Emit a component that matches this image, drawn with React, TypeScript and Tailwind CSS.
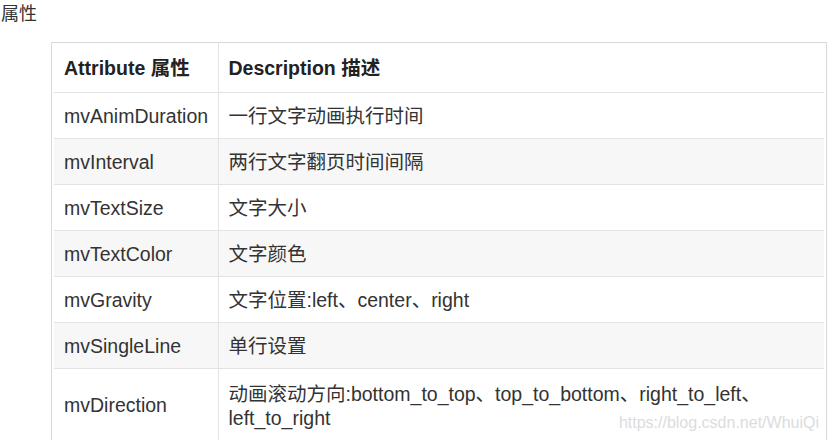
const rows: [string, React.ReactNode][] = [
  ['mvAnimDuration', '一行文字动画执行时间'],
  ['mvInterval', '两行文字翻页时间间隔'],
  ['mvTextSize', '文字大小'],
  ['mvTextColor', '文字颜色'],
  ['mvGravity', '文字位置:left、center、right'],
  ['mvSingleLine', '单行设置'],
]

export default function App() {
  return (
    <div
      className="w-[828px] h-[440px] overflow-hidden bg-white text-[#333]"
      style={{ fontFamily: '"Liberation Sans", "Noto Sans CJK SC", sans-serif' }}
    >
      <div className="pl-[1px] pt-[2px] text-[18px] leading-[24px]">属性</div>

      <div className="relative ml-[51px] mt-[16px] w-[776px] border border-[#d9d9d9] px-[2px]">
        <table className="w-full border-collapse text-[19.5px]">
          <colgroup>
            <col className="w-[164px]" />
            <col />
          </colgroup>
          <thead>
            <tr className="h-[49px] border-b border-[#e3e3e3]">
              <th className="pl-[10px] pt-[2px] text-left font-bold text-[#222]">Attribute 属性</th>
              <th className="border-l border-[#e3e3e3] pl-[10px] pt-[2px] text-left font-bold text-[#222]">Description 描述</th>
            </tr>
          </thead>
          <tbody>
            {rows.map(([attr, desc], i) => (
              <tr
                key={attr}
                className={`h-[46px] border-b border-[#e3e3e3] ${i % 2 === 1 ? 'bg-[#f7f7f7]' : 'bg-white'}`}
              >
                <td className="pl-[10px] pt-[3px]">{attr}</td>
                <td className="border-l border-[#e3e3e3] pl-[10px] pt-[3px]">{desc}</td>
              </tr>
            ))}
            <tr className="h-[72px]">
              <td className="pl-[10px] pt-[3px]">mvDirection</td>
              <td className="border-l border-[#e3e3e3] pl-[10px] pt-[3px] leading-[24px]">
                动画滚动方向:bottom_to_top、top_to_bottom、right_to_left、
                <br />
                left_to_right
              </td>
            </tr>
          </tbody>
        </table>
        <div className="absolute right-[7px] bottom-[5px] text-[16px] text-[#dcdcdc]">
          https://blog.csdn.net/WhuiQi
        </div>
      </div>
    </div>
  )
}
